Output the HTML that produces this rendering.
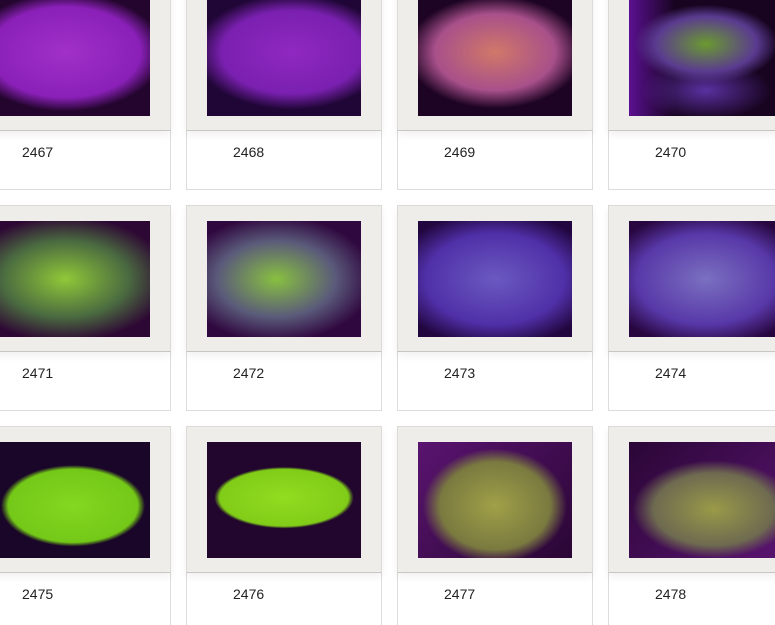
<!DOCTYPE html>
<html><head><meta charset="utf-8"><style>
html,body{margin:0;padding:0;background:#fff;width:775px;height:625px;overflow:hidden;position:relative;font-family:"Liberation Sans",Arial,sans-serif}
.card{position:absolute;width:196px;height:206px;border:1px solid #dcdcdc;box-sizing:border-box;background:#fff}
.frame{position:absolute;left:-1px;top:-1px;width:196px;height:147px;background:#efedea;border:1px solid #dcdad6;border-bottom:1px solid #c8c6c2;box-sizing:border-box;box-shadow:0 4px 8px rgba(0,0,0,0.06)}
.img{position:absolute;left:20px;top:15px;width:154px;height:116px}
.lbl{position:absolute;left:46px;top:159px;font-size:14px;color:#222}
</style></head><body>
<div id="g"></div>
<script>
var imgs=[
"radial-gradient(ellipse 75% 60% at 45% 45%,#a030c8 0%,#8a20b8 65%,transparent 85%),#24052e",
"radial-gradient(ellipse 70% 55% at 55% 45%,#9028c0 0%,#7a20b0 65%,transparent 90%),#200636",
"radial-gradient(ellipse 65% 55% at 50% 45%,#d07868 0%,#a8508a 60%,transparent 88%),#1e0424",
"radial-gradient(ellipse 55% 40% at 50% 38%,#6a9a30 0%,#5a3a90 60%,transparent 85%),radial-gradient(ellipse 50% 30% at 50% 78%,#5a30a0,transparent 85%),linear-gradient(90deg,#5a1090 0%,#180420 30%),#180420",
"radial-gradient(ellipse 75% 60% at 45% 50%,#90c838 0%,#4a6a40 55%,transparent 90%),#2e0834",
"radial-gradient(ellipse 70% 60% at 45% 50%,#88c040 0%,#5a5a7a 55%,transparent 90%),#300840",
"radial-gradient(ellipse 75% 65% at 50% 50%,#6a5ac0 0%,#5030a8 60%,transparent 90%),#220640",
"radial-gradient(ellipse 75% 65% at 50% 50%,#7a70c0 0%,#5838a8 60%,transparent 90%),#280640",
"radial-gradient(ellipse 60% 45% at 50% 55%,#84d820 0%,#74c818 70%,transparent 78%),#1a0628",
"radial-gradient(ellipse 58% 34% at 50% 48%,#92dc20 0%,#80cc18 72%,transparent 78%),#22062e",
"radial-gradient(ellipse 55% 58% at 50% 55%,#a0a048 0%,#7a7a40 65%,transparent 85%),linear-gradient(135deg,#5a1470,#2a0634)",
"radial-gradient(ellipse 60% 48% at 55% 58%,#9a9a48 0%,#6e6a50 65%,transparent 88%),linear-gradient(135deg,#2a0636,#5a1470)"
];
var h="",n=2467;
for(var r=0;r<3;r++)for(var c=0;c<4;c++){
 var x=-25+211*c, y=-16+221*r, i=r*4+c;
 h+='<div class="card" style="left:'+x+'px;top:'+y+'px"><div class="frame"><div class="img" style="background:'+imgs[i]+'"></div></div><div class="lbl">'+(n+i)+'</div></div>';
}
document.getElementById("g").innerHTML=h;
</script>
</body></html>
